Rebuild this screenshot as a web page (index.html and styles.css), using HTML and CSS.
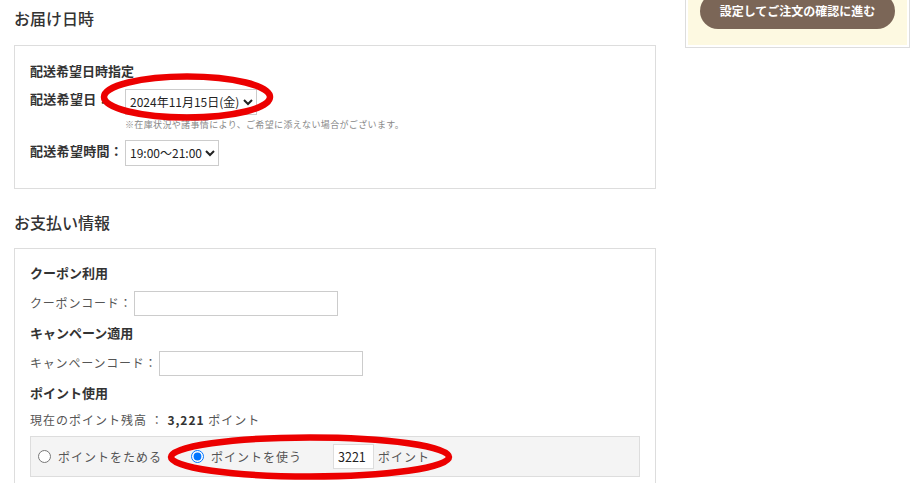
FILE: index.html
```html
<!DOCTYPE html>
<html lang="ja">
<head>
	<meta charset="UTF-8">
	<title>ご注文手続き</title>
	<link rel="stylesheet" href="styles.css">
</head>
<body>
	<div class="page">
		<div class="main">
			<h2 class="sec-title">お届け日時</h2>
			<div class="panel panel-delivery">
				<p class="sub-title">配送希望日時指定</p>
				<div class="row">
					<span class="label">配送希望日：</span>
					<div class="field">
						<select class="sel sel-date">
							<option>2024年11月15日(金)</option>
						</select>
						<p class="note">※在庫状況や諸事情により、ご希望に添えない場合がございます。</p>
					</div>
				</div>
				<div class="row row-time">
					<span class="label">配送希望時間：</span>
					<select class="sel sel-time">
						<option>19:00～21:00</option>
					</select>
				</div>
			</div>

			<h2 class="sec-title sec-pay">お支払い情報</h2>
			<div class="panel panel-pay">
				<p class="sub-title">クーポン利用</p>
				<div class="code-row">
					<span class="code-label">クーポンコード：</span>
					<input type="text" class="code-input">
				</div>
				<p class="sub-title">キャンペーン適用</p>
				<div class="code-row">
					<span class="code-label">キャンペーンコード：</span>
					<input type="text" class="code-input">
				</div>
				<p class="sub-title">ポイント使用</p>
				<p class="balance">現在のポイント残高 ： <b>3,221</b> ポイント</p>
				<div class="point-box">
					<label class="opt"><input type="radio" name="pt">ポイントをためる</label>
					<label class="opt opt-use"><input type="radio" name="pt" checked>ポイントを使う</label>
					<input type="text" class="pt-input" value="3221">
					<span class="pt-unit">ポイント</span>
				</div>
			</div>
		</div>

		<div class="side">
			<div class="side-box">
				<div class="side-inner">
					<a class="btn-next">設定してご注文の確認に進む</a>
				</div>
			</div>
		</div>
	</div>

	<!-- 注釈の赤丸 -->
	<svg class="marks" width="922" height="483" viewBox="0 0 922 483">
		<ellipse cx="187" cy="97" rx="83" ry="20.5" fill="none" stroke="#ec0000" stroke-width="6.5"/>
		<ellipse cx="310" cy="457" rx="139" ry="19.5" fill="none" stroke="#ec0000" stroke-width="6.5"/>
	</svg>
</body>
</html>
```

FILE: styles.css
```css
*{margin: 0;padding: 0;box-sizing: border-box;}
body{width: 922px;height: 483px;overflow: hidden;position: relative;background: #fff;color: #333;font-family: "Noto Sans CJK JP", "Noto Sans", sans-serif;}
.page{display: flex;align-items: flex-start;}
.main{width: 642px;margin-left: 14px;}
.side{width: 225px;margin-left: 29px;margin-top: -22px;}

.sec-title{font-size: 16px;font-weight: 500;line-height: 24px;margin-top: 6px;}
.sec-pay{margin-top: 21px;}
.panel{border: 1px solid #ddd;margin-top: 15px;padding: 16px 15px 22px;}
.panel-pay{margin-top: 14px;padding-top: 15px;height: 260px;}
.sub-title{font-size: 13px;font-weight: 700;line-height: 18px;}

.row{display: flex;align-items: flex-start;margin-top: 8px;}
.label{font-size: 13px;font-weight: 700;line-height: 18px;letter-spacing: .3px;width: 95px;white-space: nowrap;padding-top: 2px;}
.sel{height: 26px;border: 1px solid #ccc;border-radius: 0;background: #fff;font-family: "Noto Sans CJK JP", sans-serif;font-size: 12px;color: #222;padding: 0;}
.note{font-size: 9px;line-height: 14px;color: #888;letter-spacing: .35px;margin-top: 3px;white-space: nowrap;}
.row-time{margin-top: 8px;}

.code-row{display: flex;align-items: center;margin: 9px 0 8px;}
.code-label{font-size: 12px;color: #555;letter-spacing: .8px;line-height: 18px;margin-right: 2px;}
.code-input{width: 204px;height: 25px;border: 1px solid #ccc;background: #fff;}
.balance{font-size: 12px;color: #555;letter-spacing: 1px;line-height: 18px;margin-top: 9px;}
.balance b{color: #333;}

.point-box{display: flex;align-items: center;height: 41px;margin-top: 7px;background: #f4f4f4;border: 1px solid #ddd;padding-left: 7px;font-size: 12px;color: #555;letter-spacing: 1px;}
.opt{display: flex;align-items: center;}
.opt input{width: 13px;height: 13px;margin: 0 7px 0 0;}
.opt-use{margin-left: 29px;}
.pt-input{width: 41px;height: 25px;margin-left: 31px;border: 1px solid #ddd;background: #fff;font-family: "Noto Sans CJK JP", sans-serif;font-size: 12.5px;color: #222;padding-left: 4px;letter-spacing: 0;}
.pt-unit{margin-left: 4px;}

.side-box{border: 1px solid #ddd;padding: 2px;}
.side-inner{background: #fdf9e1;padding: 12px 12px 16px;}
.btn-next{display: block;height: 36px;line-height: 36px;border-radius: 18px;background: #7b6657;color: #fff;text-align: center;font-size: 12px;font-weight: 700;}

.marks{position: absolute;left: 0;top: 0;pointer-events: none;}
```
